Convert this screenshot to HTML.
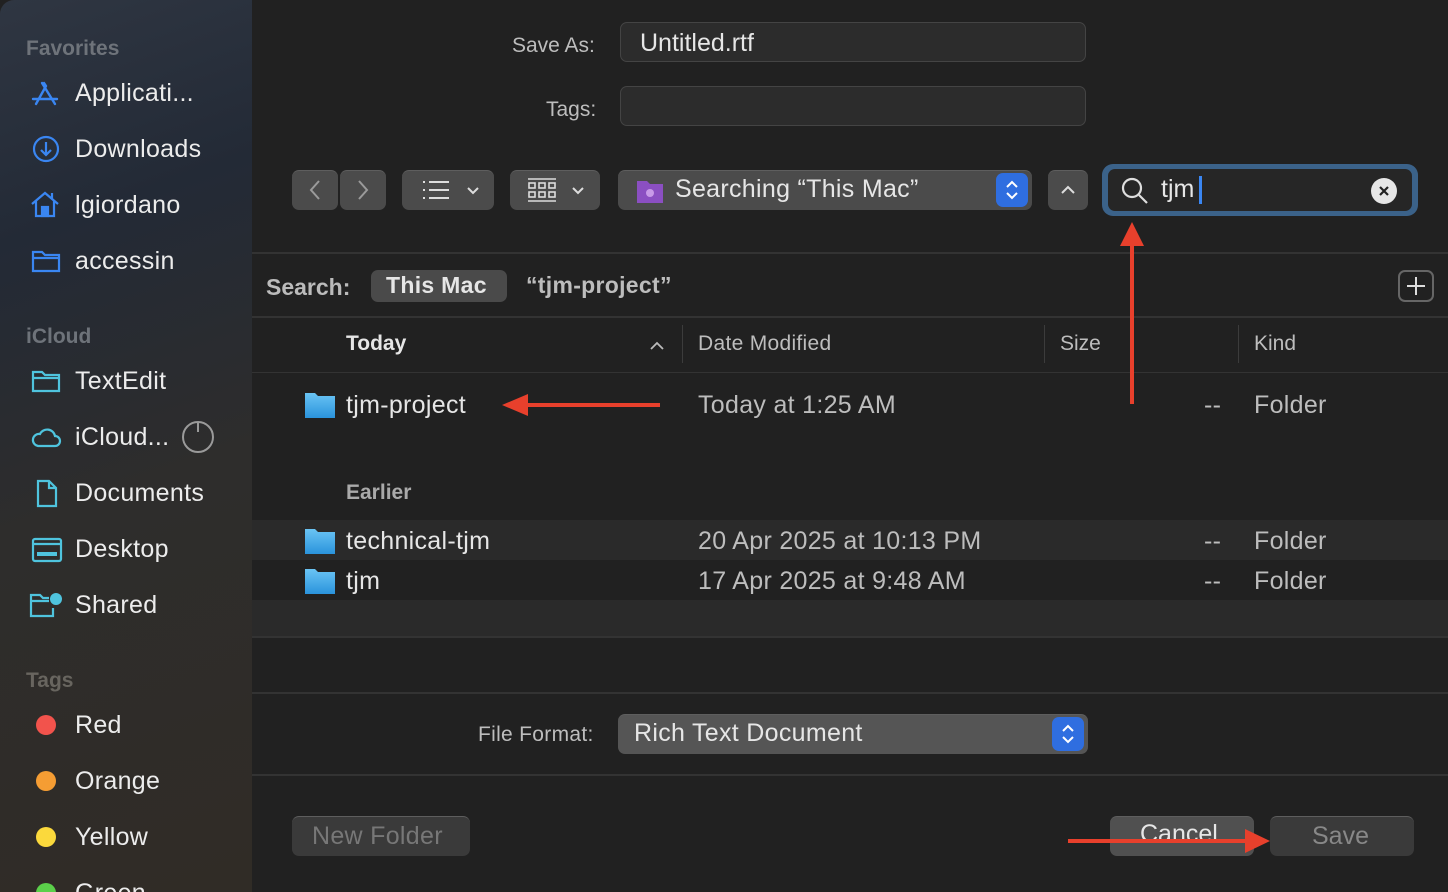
<!DOCTYPE html>
<html style="overflow:hidden;width:1448px;height:892px"><head><meta charset="utf-8"><style>
*{margin:0;padding:0;box-sizing:border-box}
body{width:1448px;height:892px;overflow:hidden;background:#212121;font-family:"Liberation Sans",sans-serif;color:#e6e6e6;position:relative}
.a{position:absolute;white-space:nowrap}
#side{position:absolute;left:0;top:0;width:252px;height:892px;overflow:hidden;background:linear-gradient(160deg,#2f3642 0%,#232a36 25%,#2e2d2c 55%,#302c26 100%);border-top-left-radius:14px}
.sh{font-size:21px;color:#6e737a;font-weight:bold}
.si{font-size:25px;color:#ececec;letter-spacing:0.3px}
.btn{position:absolute;background:#4b4b4b;border-radius:7px;border-top:1px solid #5e5e5e}
.hl{position:absolute;left:252px;right:0;height:2px;background:#333}
.t{font-size:25px;letter-spacing:0.3px}
.g{color:#bdbdbd}
.dot{position:absolute;width:20px;height:20px;border-radius:50%}
</style></head><body>
<div id="side">
<div class="a sh" style="left:26px;top:37px">Favorites</div>
<svg class="a" style="left:30px;top:80px" width="30" height="28" viewBox="0 0 30 28" fill="none" stroke="#3a86f2" stroke-width="2.4" stroke-linecap="round"><path d="M6 24L16 6M12 3l13 21M3 19h24M14 3l2 3"/></svg>
<div class="a si" style="left:75px;top:79px">Applicati...</div>
<svg class="a" style="left:32px;top:135px" width="28" height="28" viewBox="0 0 28 28" fill="none" stroke="#3a86f2" stroke-width="2.2"><circle cx="14" cy="14" r="12"/><path d="M14 7v13M9 15l5 5 5-5"/></svg>
<div class="a si" style="left:75px;top:135px">Downloads</div>
<svg class="a" style="left:30px;top:190px" width="30" height="28" viewBox="0 0 30 28" fill="none" stroke="#3a86f2" stroke-width="2.2"><path d="M2 14L15 3l13 11M6 11v15h18V11M22 3v6"/><rect x="12" y="17" width="6" height="9" fill="#3a86f2"/></svg>
<div class="a si" style="left:75px;top:191px">lgiordano</div>
<svg class="a" style="left:31px;top:249px" width="30" height="24" viewBox="0 0 30 24" fill="none" stroke="#3a86f2" stroke-width="2.2"><path d="M2 3h9l3 3h14v16H2z M2 9h26"/></svg>
<div class="a si" style="left:75px;top:247px">accessin</div>
<div class="a sh" style="left:26px;top:325px">iCloud</div>
<svg class="a" style="left:31px;top:369px" width="30" height="24" viewBox="0 0 30 24" fill="none" stroke="#4fc4de" stroke-width="2.2"><path d="M2 3h9l3 3h14v16H2z M2 9h26"/></svg>
<div class="a si" style="left:75px;top:367px">TextEdit</div>
<svg class="a" style="left:30px;top:425px" width="32" height="24" viewBox="0 0 32 24" fill="none" stroke="#4fc4de" stroke-width="2.2"><path d="M8 21h17a5 5 0 0 0 0-10 8 8 0 0 0-15-2 6 6 0 0 0-2 12z"/></svg>
<div class="a si" style="left:75px;top:423px">iCloud...</div>
<svg class="a" style="left:181px;top:420px" width="34" height="34" viewBox="0 0 34 34" fill="none" stroke="#9a9a9a" stroke-width="2"><circle cx="17" cy="17" r="15"/><path d="M17 2v10" /></svg>
<div class="a si" style="left:75px;top:479px">Documents</div>
<svg class="a" style="left:35px;top:479px" width="24" height="30" viewBox="0 0 24 30" fill="none" stroke="#4fc4de" stroke-width="2.2"><path d="M3 2h11l7 7v18H3z M14 2v7h7"/></svg>
<svg class="a" style="left:31px;top:537px" width="32" height="26" viewBox="0 0 32 26" fill="none" stroke="#4fc4de" stroke-width="2.2"><rect x="2" y="2" width="28" height="22" rx="2"/><path d="M2 7h28"/><rect x="6" y="15" width="20" height="4" fill="#4fc4de" stroke="none"/></svg>
<div class="a si" style="left:75px;top:535px">Desktop</div>
<svg class="a" style="left:29px;top:592px" width="34" height="26" viewBox="0 0 34 26" fill="none" stroke="#4fc4de" stroke-width="2.2"><path d="M24 16v8H2V3h9l3 3h6M2 9h18"/><circle cx="27" cy="7" r="6" fill="#4fc4de" stroke="none"/></svg>
<div class="a si" style="left:75px;top:591px">Shared</div>
<div class="a sh" style="left:26px;top:669px;color:#68655f">Tags</div>
<div class="dot" style="left:36px;top:715px;background:#f2534c"></div><div class="a si" style="left:75px;top:711px">Red</div>
<div class="dot" style="left:36px;top:771px;background:#f59d33"></div><div class="a si" style="left:75px;top:767px">Orange</div>
<div class="dot" style="left:36px;top:827px;background:#fbd93c"></div><div class="a si" style="left:75px;top:823px">Yellow</div>
<div class="dot" style="left:36px;top:883px;background:#5bd04a"></div><div class="a si" style="left:75px;top:879px">Green</div>
</div>

<div class="a g" style="left:512px;top:34px;font-size:21px">Save As:</div>
<div class="btn" style="left:620px;top:22px;width:466px;height:40px;background:#2c2c2c;border:1px solid #444"></div>
<div class="a" style="left:640px;top:29px;font-size:25px">Untitled.rtf</div>
<div class="a g" style="left:546px;top:98px;font-size:21px">Tags:</div>
<div class="btn" style="left:620px;top:86px;width:466px;height:40px;background:#2c2c2c;border:1px solid #444"></div>

<div class="btn" style="left:292px;top:170px;width:46px;height:40px"></div>
<div class="btn" style="left:340px;top:170px;width:46px;height:40px"></div>
<svg class="a" style="left:292px;top:170px" width="94" height="40" fill="none" stroke="#9a9a9a" stroke-width="2"><path d="M27 11l-8 9 8 9M67 11l8 9-8 9"/></svg>
<div class="btn" style="left:402px;top:170px;width:92px;height:40px"></div>
<svg class="a" style="left:402px;top:170px" width="92" height="40" fill="none" stroke="#ddd" stroke-width="2"><path d="M27 12h20M27 20h20M27 28h20M21 12h2M21 20h2M21 28h2M66 18l5 5 5-5"/></svg>
<div class="btn" style="left:510px;top:170px;width:90px;height:40px"></div>
<svg class="a" style="left:510px;top:170px" width="90" height="40" fill="none" stroke="#ddd" stroke-width="1.6"><path d="M18 9h28M18 31h28"/><rect x="19" y="13" width="6" height="5"/><rect x="29" y="13" width="6" height="5"/><rect x="39" y="13" width="6" height="5"/><rect x="19" y="22" width="6" height="5"/><rect x="29" y="22" width="6" height="5"/><rect x="39" y="22" width="6" height="5"/><path d="M63 18l5 5 5-5" stroke-width="2"/></svg>
<div class="btn" style="left:618px;top:170px;width:414px;height:40px"></div>
<svg class="a" style="left:636px;top:178px" width="28" height="26"><path d="M1 3h10l3 3h13v19H1z" fill="#8b4fc2"/><circle cx="14" cy="15" r="4" fill="#c89ae8"/></svg>
<div class="a" style="left:675px;top:175px;font-size:25px;letter-spacing:0.3px">Searching “This Mac”</div>
<div class="a" style="left:996px;top:173px;width:32px;height:34px;background:#2f6ee0;border-radius:7px"></div>
<svg class="a" style="left:996px;top:173px" width="32" height="34" fill="none" stroke="#fff" stroke-width="2"><path d="M11 14l5-5 5 5M11 20l5 5 5-5"/></svg>
<div class="btn" style="left:1048px;top:170px;width:40px;height:40px"></div>
<svg class="a" style="left:1048px;top:170px" width="40" height="40" fill="none" stroke="#ddd" stroke-width="2"><path d="M14 23l6-6 6 6"/></svg>
<div class="a" style="left:1102px;top:164px;width:316px;height:52px;border-radius:11px;background:#3b6289"></div>
<div class="a" style="left:1108px;top:169px;width:304px;height:42px;border-radius:7px;background:#262626"></div>
<svg class="a" style="left:1120px;top:176px" width="30" height="30" fill="none" stroke="#ddd" stroke-width="2.2"><circle cx="12" cy="12" r="9"/><path d="M19 19l8 8"/></svg>
<div class="a" style="left:1161px;top:175px;font-size:25px">tjm</div>
<div class="a" style="left:1199px;top:176px;width:3px;height:28px;background:#3a86f2"></div>
<div class="a" style="left:1371px;top:178px;width:26px;height:26px;border-radius:50%;background:#e6e6e6"></div>
<svg class="a" style="left:1371px;top:178px" width="26" height="26" fill="none" stroke="#222" stroke-width="2.2"><path d="M9 9l8 8M17 9l-8 8"/></svg>

<div class="hl" style="top:252px"></div>
<div class="a g" style="left:266px;top:274px;font-size:23px;font-weight:bold;color:#bbb">Search:</div>
<div class="a" style="left:371px;top:270px;width:136px;height:32px;border-radius:7px;background:#4a4a4a"></div>
<div class="a" style="left:386px;top:272px;font-size:23px;font-weight:bold;letter-spacing:0.3px">This Mac</div>
<div class="a g" style="left:526px;top:272px;font-size:23px;font-weight:bold;letter-spacing:0.3px">“tjm-project”</div>
<div class="a" style="left:1398px;top:270px;width:36px;height:32px;border:2px solid #666;border-radius:7px"></div>
<svg class="a" style="left:1398px;top:270px" width="36" height="32" fill="none" stroke="#ddd" stroke-width="2"><path d="M18 7v18M9 16h18"/></svg>
<div class="hl" style="top:316px"></div>

<div class="a" style="left:346px;top:332px;font-size:21px;font-weight:bold">Today</div>
<svg class="a" style="left:648px;top:338px" width="18" height="14" fill="none" stroke="#bbb" stroke-width="1.8"><path d="M3 11l6-6 6 6"/></svg>
<div class="a" style="left:682px;top:325px;width:1px;height:38px;background:#3c3c3c"></div>
<div class="a g" style="left:698px;top:332px;font-size:21px;letter-spacing:0.3px">Date Modified</div>
<div class="a" style="left:1044px;top:325px;width:1px;height:38px;background:#3c3c3c"></div>
<div class="a g" style="left:1060px;top:332px;font-size:21px">Size</div>
<div class="a" style="left:1238px;top:325px;width:1px;height:38px;background:#3c3c3c"></div>
<div class="a g" style="left:1254px;top:332px;font-size:21px">Kind</div>
<div class="hl" style="top:372px;height:1px"></div>

<svg width="0" height="0" style="position:absolute"><defs><linearGradient id="fg" x1="0" y1="0" x2="0" y2="1"><stop offset="0" stop-color="#6ac4f4"/><stop offset="1" stop-color="#2a93dc"/></linearGradient></defs></svg>
<svg class="a" style="left:304px;top:391px" width="32" height="28"><path d="M1 2h10l3 3h17v22H1z" fill="url(#fg)"/></svg>
<div class="a t" style="left:346px;top:391px">tjm-project</div>
<div class="a t g" style="left:698px;top:391px">Today at 1:25 AM</div>
<div class="a t g" style="left:1204px;top:391px">--</div>
<div class="a t g" style="left:1254px;top:391px">Folder</div>
<div class="a" style="left:346px;top:481px;font-size:21px;font-weight:bold;color:#aaa">Earlier</div>

<div class="a" style="left:252px;top:520px;width:1196px;height:40px;background:#2a2a2a"></div>
<div class="a" style="left:252px;top:600px;width:1196px;height:36px;background:#2a2a2a"></div>
<svg class="a" style="left:304px;top:527px" width="32" height="28"><path d="M1 2h10l3 3h17v22H1z" fill="url(#fg)"/></svg>
<div class="a t" style="left:346px;top:527px">technical-tjm</div>
<div class="a t g" style="left:698px;top:527px">20 Apr 2025 at 10:13 PM</div>
<div class="a t g" style="left:1204px;top:527px">--</div>
<div class="a t g" style="left:1254px;top:527px">Folder</div>
<svg class="a" style="left:304px;top:567px" width="32" height="28"><path d="M1 2h10l3 3h17v22H1z" fill="url(#fg)"/></svg>
<div class="a t" style="left:346px;top:567px">tjm</div>
<div class="a t g" style="left:698px;top:567px">17 Apr 2025 at 9:48 AM</div>
<div class="a t g" style="left:1204px;top:567px">--</div>
<div class="a t g" style="left:1254px;top:567px">Folder</div>
<div class="hl" style="top:636px"></div>
<div class="hl" style="top:692px"></div>

<div class="a g" style="left:478px;top:723px;font-size:21px;letter-spacing:0.3px">File Format:</div>
<div class="btn" style="left:618px;top:714px;width:470px;height:40px;background:#555"></div>
<div class="a" style="left:634px;top:719px;font-size:25px;letter-spacing:0.3px">Rich Text Document</div>
<div class="a" style="left:1052px;top:717px;width:32px;height:34px;background:#2f6ee0;border-radius:7px"></div>
<svg class="a" style="left:1052px;top:717px" width="32" height="34" fill="none" stroke="#fff" stroke-width="2"><path d="M11 14l5-5 5 5M11 20l5 5 5-5"/></svg>
<div class="hl" style="top:774px"></div>

<div class="btn" style="left:292px;top:816px;width:178px;height:40px;background:#3a3a3a"></div>
<div class="a" style="left:312px;top:822px;font-size:25px;color:#777;letter-spacing:0.3px">New Folder</div>
<div class="btn" style="left:1110px;top:816px;width:144px;height:40px;background:#505050"></div>
<div class="a" style="left:1140px;top:820px;font-size:25px">Cancel</div>
<div class="btn" style="left:1270px;top:816px;width:144px;height:40px;background:#3a3a3a"></div>
<div class="a" style="left:1312px;top:822px;font-size:25px;color:#888">Save</div>

<svg class="a" style="left:0;top:0" width="1448" height="892"><g fill="#e8402c" stroke="#e8402c">
<path d="M660 405H525" stroke-width="4"/><path d="M502 405l26-11v22z" stroke="none"/>
<path d="M1132 404V245" stroke-width="4"/><path d="M1132 222l-12 24h24z" stroke="none"/>
<path d="M1068 841h180" stroke-width="4"/><path d="M1270 841l-25-12v24z" stroke="none"/>
</g></svg>
</body></html>
